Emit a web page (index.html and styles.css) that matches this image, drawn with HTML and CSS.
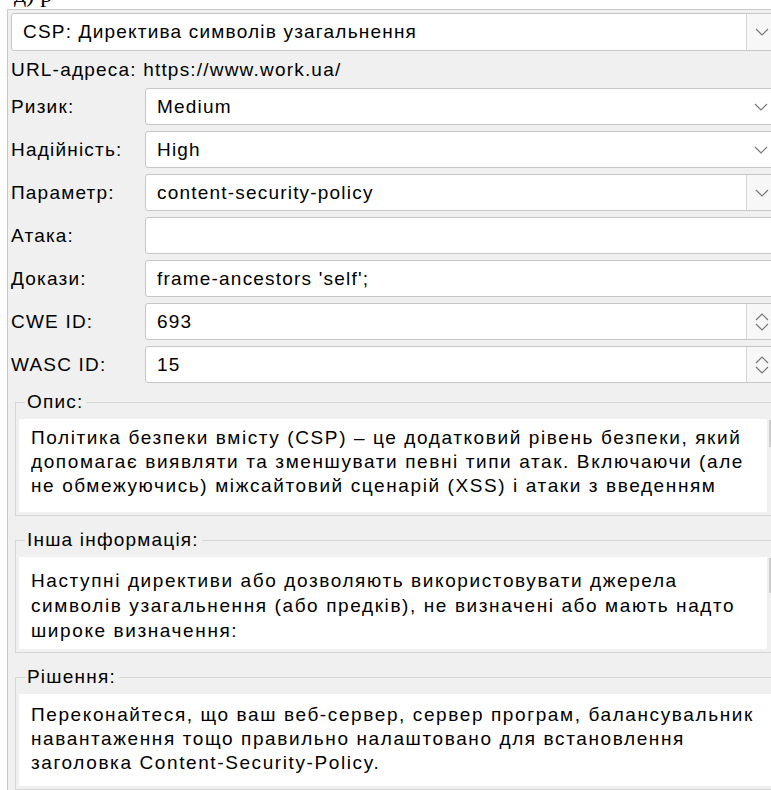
FILE: index.html
```html
<!DOCTYPE html>
<html lang="uk">
<head>
<meta charset="utf-8">
<title>Сповіщення</title>
<link rel="stylesheet" href="styles.css">
</head>
<body>
<div class="viewport">
  <div class="caption"><span>д) р</span></div>
  <div class="panel">
    <div class="combo editable wide">
      <span class="value">CSP: Директива символів узагальнення</span>
      <span class="btn"><svg class="chev" viewBox="0 0 14 8"><path d="M1 1 L7 7 L13 1"/></svg></span>
    </div>
    <div class="url-row">URL-адреса:&nbsp;https://www.work.ua/</div>
    <div class="form">
      <label class="lbl">Ризик:</label>
      <div class="combo">
        <span class="value">Medium</span>
        <span class="btn plain"><svg class="chev" viewBox="0 0 14 8"><path d="M1 1 L7 7 L13 1"/></svg></span>
      </div>
      <label class="lbl">Надійність:</label>
      <div class="combo">
        <span class="value">High</span>
        <span class="btn plain"><svg class="chev" viewBox="0 0 14 8"><path d="M1 1 L7 7 L13 1"/></svg></span>
      </div>
      <label class="lbl">Параметр:</label>
      <div class="combo editable">
        <span class="value">content-security-policy</span>
        <span class="btn"><svg class="chev" viewBox="0 0 14 8"><path d="M1 1 L7 7 L13 1"/></svg></span>
      </div>
      <label class="lbl">Атака:</label>
      <div class="combo"><span class="value"></span></div>
      <label class="lbl">Докази:</label>
      <div class="combo"><span class="value">frame-ancestors 'self';</span></div>
      <label class="lbl">CWE ID:</label>
      <div class="combo editable">
        <span class="value">693</span>
        <span class="btn"><svg class="spin" viewBox="0 0 14 18"><path d="M1 7 L7 1 L13 7 M1 11 L7 17 L13 11"/></svg></span>
      </div>
      <label class="lbl">WASC ID:</label>
      <div class="combo editable">
        <span class="value">15</span>
        <span class="btn"><svg class="spin" viewBox="0 0 14 18"><path d="M1 7 L7 1 L13 7 M1 11 L7 17 L13 11"/></svg></span>
      </div>
    </div>

    <fieldset class="group g-desc">
      <legend>Опис:</legend>
      <div class="textbox">
        <div class="text"><div class="lines">Політика безпеки вмісту (CSP) – це додатковий рівень безпеки, який допомагає виявляти та зменшувати певні типи атак. Включаючи (але не обмежуючись) міжсайтовий сценарій (XSS) і атаки з введенням даних. Ці атаки використовуються для всього: від крадіжки даних до спотворення сайту чи розповсюдження зловмисного програмного забезпечення.</div></div>
        <div class="scroll"><div class="thumb"></div></div>
      </div>
    </fieldset>

    <fieldset class="group g-other">
      <legend>Інша інформація:</legend>
      <div class="textbox">
        <div class="text"><div class="lines">Наступні директиви або дозволяють використовувати джерела символів узагальнення (або предків), не визначені або мають надто широке визначення:<br><br>frame-ancestors</div></div>
        <div class="scroll"><div class="thumb"></div></div>
      </div>
    </fieldset>

    <fieldset class="group g-sol">
      <legend>Рішення:</legend>
      <div class="textbox">
        <div class="text"><div class="lines">Переконайтеся, що ваш веб-сервер, сервер програм, балансувальник навантаження тощо правильно налаштовано для встановлення заголовка Content-Security-Policy.</div></div>
      </div>
    </fieldset>
  </div>
</div>
</body>
</html>
```

FILE: styles.css
```css
html, body {
  margin: 0;
  padding: 0;
  background: #ffffff;
  overflow: hidden;
}

.viewport {
  width: 771px;
  height: 790px;
  overflow: hidden;
  font-family: "Liberation Sans", Arial, sans-serif;
  font-size: 19px;
  color: #000;
}

/* tail of the document line above the panel */
.caption {
  height: 9px;
  overflow: hidden;
  padding-left: 14px;
  font-family: "Liberation Serif", "Times New Roman", serif;
  font-size: 24px;
  line-height: 24px;
}
.caption span {
  display: block;
  margin-top: -18px;
}

.panel {
  width: 772px;
  margin-left: 7px;
  box-sizing: border-box;
  background: #f0f0f0;
  border-left: 1px solid #c9c9c9;
  border-top: 1px solid #c9c9c9;
  padding: 3px 0 0 3px;
  height: 790px;
}

.combo {
  height: 37px;
  box-sizing: border-box;
  background: #fff;
  border: 1px solid #c6c6c6;
  border-radius: 3px;
  display: flex;
  align-items: center;
  letter-spacing: 1.2px;
}
.combo.wide {
  height: 38px;
}
.combo .value {
  flex: 1;
  padding-left: 11px;
  white-space: nowrap;
  overflow: hidden;
}
.btn {
  width: 32px;
  align-self: stretch;
  display: flex;
  align-items: center;
  padding-left: 8px;
  box-sizing: border-box;
}
.combo.editable .btn {
  border-left: 1px solid #d4d4d4;
  background: #f7f7f7;
}
.chev {
  width: 14px;
  height: 8px;
}
.spin {
  width: 14px;
  height: 18px;
}
.chev path, .spin path {
  fill: none;
  stroke: #777;
  stroke-width: 1.2;
}

.url-row {
  height: 37px;
  display: flex;
  align-items: center;
  letter-spacing: 1.2px;
}

.form {
  display: grid;
  grid-template-columns: 134px 1fr;
  row-gap: 6px;
  align-items: center;
}
.lbl {
  letter-spacing: 1.2px;
}

.group {
  margin: 0 0 0 4px;
  padding: 6px 0 0 3px;
  border: 1px solid #d6d6d6;
  border-right: none;
  min-width: 0;
}
.group legend {
  padding: 0 3px 0 2px;
  margin-left: 6px;
  letter-spacing: 1.2px;
  line-height: 22px;
}
.g-desc { margin-top: 8px; }
.g-other { margin-top: 13px; }
.g-sol { margin-top: 13px; }

.textbox {
  background: #fff;
  display: flex;
  height: 93px;
  margin-bottom: 3px;
}
.g-other .textbox { height: 92px; }
.g-sol .textbox { height: 92px; }
.textbox .text {
  flex: 1;
  padding: 7px 0 0 12px;
  letter-spacing: 1.6px;
  width: 0;
}
.g-other .text {
  padding-top: 11px;
}
.g-sol .text {
  padding-top: 9px;
  padding-right: 10px;
}
/* the visible part of the scrolled text: three lines */
.lines {
  height: 72px;
  line-height: 24px;
  overflow: hidden;
}
.g-other .lines {
  height: 75px;
  line-height: 25px;
}
.scroll {
  width: 16px;
  background: #f0f0f0;
  padding-top: 1px;
  margin-right: -4px;
}
.thumb {
  height: 27px;
  margin-left: 2px;
  background: #cdcdcd;
}
.g-other .thumb { height: 35px; }
```
